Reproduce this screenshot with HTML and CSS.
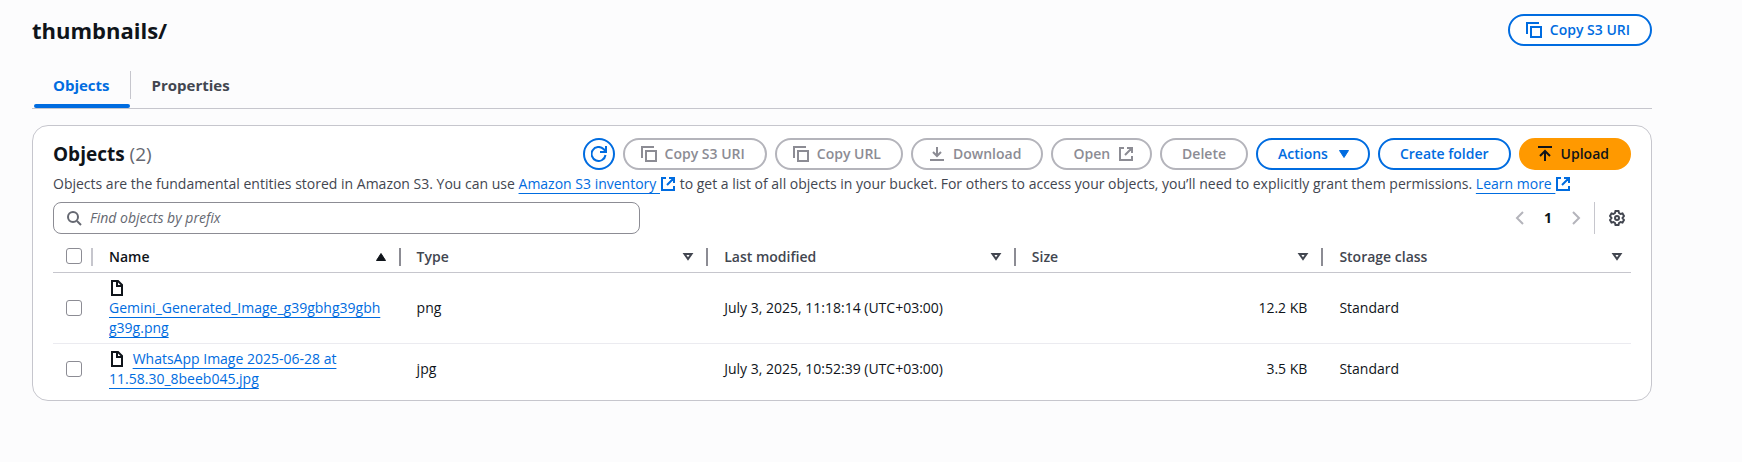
FILE: index.html
```html
<!DOCTYPE html>
<html lang="en">
<head>
<meta charset="utf-8">
<title>thumbnails/</title>
<link rel="stylesheet" href="styles.css">
</head>
<body>
<svg class="sprite" aria-hidden="true">
  <symbol id="copy" viewBox="0 0 16 16"><path d="M5 5h10v10H5zM1 12V1h12"/></symbol>
  <symbol id="external" viewBox="0 0 16 16"><path d="M6 2H2v12h12v-4M9 2h5v5M14 2 7 9"/></symbol>
  <symbol id="file" viewBox="0 0 16 16"><path d="M3 1h6l4 4v10H3zM8 1v5h5"/></symbol>
  <symbol id="sort" viewBox="0 0 16 16"><path d="M4.500 5h7L8 10z"/></symbol>
</svg>
<main class="page">
  <header class="page-header">
    <h1 class="page-title">thumbnails/</h1>
    <button class="button" type="button"><svg class="icon icon-left"><use href="#copy"/></svg>Copy S3 URI</button>
  </header>
  <nav class="tabs">
    <a class="tab tab-active" href="#objects">Objects</a>
    <a class="tab" href="#properties">Properties</a>
  </nav>
  <section class="panel" id="objects">
    <div class="panel-header">
      <h2 class="panel-title">Objects <span class="count">(2)</span></h2>
      <div class="actions">
        <button class="button button-round" type="button" aria-label="Refresh"><svg class="icon" viewBox="0 0 16 16"><path d="M14.500 9A7 7 0 1 1 12.500 3L15 5.500M15 0v6H9"/></svg></button>
        <button class="button" type="button" disabled><svg class="icon icon-left"><use href="#copy"/></svg>Copy S3 URI</button>
        <button class="button" type="button" disabled><svg class="icon icon-left"><use href="#copy"/></svg>Copy URL</button>
        <button class="button" type="button" disabled><svg class="icon icon-left" viewBox="0 0 16 16"><path d="M8 1v9M4 6l4 4 4-4M1 14h14"/></svg>Download</button>
        <button class="button" type="button" disabled>Open<svg class="icon icon-right"><use href="#external"/></svg></button>
        <button class="button" type="button" disabled>Delete</button>
        <button class="button" type="button">Actions<svg class="icon icon-right icon-solid" viewBox="0 0 16 16"><path d="M3.500 4.500h9l-4.500 7z"/></svg></button>
        <button class="button" type="button">Create folder</button>
        <button class="button button-primary" type="button"><svg class="icon icon-left" viewBox="0 0 16 16"><path d="M1 1h14M8 15V5M3 10l5-5 5 5"/></svg>Upload</button>
      </div>
    </div>
    <p class="description">Objects are the fundamental entities stored in Amazon S3. You can use <a class="link" href="#inventory">Amazon S3 inventory&nbsp;</a><svg class="icon icon-inline"><use href="#external"/></svg> to get a list of all objects in your bucket. For others to access your objects, you’ll need to explicitly grant them permissions. <a class="link" href="#learn">Learn more&nbsp;</a><svg class="icon icon-inline"><use href="#external"/></svg></p>
    <div class="tools">
      <label class="search">
        <svg class="icon" viewBox="0 0 16 16"><circle cx="7" cy="7" r="5"/><path d="m11 11 4 4"/></svg>
        <input class="search-input" type="text" placeholder="Find objects by prefix" aria-label="Find objects by prefix">
      </label>
      <div class="pager">
        <button class="icon-button muted" type="button" aria-label="Previous page"><svg class="icon" viewBox="0 0 16 16"><path d="m11 2-6 6 6 6"/></svg></button>
        <button class="page-number" type="button">1</button>
        <button class="icon-button muted" type="button" aria-label="Next page"><svg class="icon" viewBox="0 0 16 16"><path d="m5 2 6 6-6 6"/></svg></button>
        <span class="rule"></span>
        <button class="icon-button" type="button" aria-label="Preferences"><svg class="icon" viewBox="0 0 16 16"><path d="M6.500 1h3l.5 2 1.500 1 2-.5 1.500 2.500L13.500 8 15 10l-1.500 2.500-2-.5-1.500 1-.5 2h-3L6 13l-1.500-1-2 .5L1 10l1.500-2L1 6l1.500-2.500 2 .5L6 3z"/><circle cx="8" cy="8" r="2"/></svg></button>
      </div>
    </div>
    <table class="table">
      <thead>
        <tr>
          <th class="select-cell"><div class="head divided light"><input class="checkbox" type="checkbox" aria-label="Select all"></div></th>
          <th class="sorted"><div class="head divided">Name<svg class="icon icon-solid" viewBox="0 0 16 16"><path d="M3.500 11.500h9L8 4.500z"/></svg></div></th>
          <th><div class="head divided">Type<svg class="icon"><use href="#sort"/></svg></div></th>
          <th><div class="head divided">Last modified<svg class="icon"><use href="#sort"/></svg></div></th>
          <th><div class="head divided">Size<svg class="icon"><use href="#sort"/></svg></div></th>
          <th class="last"><div class="head">Storage class<svg class="icon"><use href="#sort"/></svg></div></th>
        </tr>
      </thead>
      <tbody>
        <tr>
          <td class="select-cell"><input class="checkbox" type="checkbox" aria-label="Select Gemini_Generated_Image_g39gbhg39gbhg39g.png"></td>
          <td class="name"><svg class="icon file-icon"><use href="#file"/></svg> <a class="link" href="#gemini">Gemini_Generated_Image_g39gbhg39gbhg39g.png</a></td>
          <td>png</td>
          <td>July 3, 2025, 11:18:14 (UTC+03:00)</td>
          <td class="size">12.2 KB</td>
          <td>Standard</td>
        </tr>
        <tr>
          <td class="select-cell"><input class="checkbox" type="checkbox" aria-label="Select WhatsApp Image 2025-06-28 at 11.58.30_8beeb045.jpg"></td>
          <td class="name"><svg class="icon file-icon"><use href="#file"/></svg> <a class="link" href="#whatsapp">WhatsApp Image 2025-06-28 at 11.58.30_8beeb045.jpg</a></td>
          <td>jpg</td>
          <td>July 3, 2025, 10:52:39 (UTC+03:00)</td>
          <td class="size">3.5 KB</td>
          <td>Standard</td>
        </tr>
      </tbody>
    </table>
  </section>
</main>
</body>
</html>
```
FILE: styles.css
```css
* { box-sizing: border-box; }
body {
  margin: 0;
  background: #fcfcfd;
  color: #0f141a;
  font: 14px/20px "Open Sans", sans-serif;
}
button, input { font: inherit; }
.sprite { position: absolute; width: 0; height: 0; }
.page { padding: 14px 90px 0 32px; }
.icon {
  width: 16px;
  height: 16px;
  flex: none;
  fill: none;
  stroke: currentColor;
  stroke-width: 2;
}
.icon-solid { fill: currentColor; stroke-width: 1; }
.page-header, .panel-header, .tools, .actions, .pager {
  display: flex;
  align-items: center;
}
.page-header, .panel-header, .tools { justify-content: space-between; }
.page-title { margin: 0; font-size: 22px; line-height: 28px; font-weight: 700; }
.button {
  display: flex;
  align-items: center;
  justify-content: center;
  gap: 8px;
  height: 32px;
  padding: 0 20px;
  border: 2px solid #006ce0;
  border-radius: 20px;
  background: #fff;
  color: #006ce0;
  font-weight: 600;
  white-space: nowrap;
}
.button:disabled { border-color: #b4b4bb; color: #8c8c94; }
.button-round { width: 32px; padding: 0; }
.button-primary { border-color: #ff9900; background: #ff9900; color: #0f141a; }
.icon-left { margin-left: -4px; }
.icon-right { margin-right: -4px; }
.tabs { display: flex; margin-top: 25px; border-bottom: 1px solid #c6c6cd; }
.tab {
  position: relative;
  padding: 4px 21px 13px;
  color: #424650;
  font-size: 15px;
  font-weight: 700;
  text-decoration: none;
}
.tab-active { color: #006ce0; }
.tab-active::before {
  content: "";
  position: absolute;
  inset: 0 0 9px auto;
  border-right: 1px solid #c6c6cd;
}
.tab-active::after {
  content: "";
  position: absolute;
  inset: auto 1px 0 2px;
  height: 4px;
  border-radius: 2px;
  background: #006ce0;
}
.panel {
  margin-top: 16px;
  padding: 12px 20px 6px;
  border: 1px solid #c6c6cd;
  border-radius: 16px;
  background: #fff;
}
.panel-title { margin: 0; font-size: 19px; line-height: 24px; font-weight: 700; }
.count { color: #656871; font-weight: 400; }
.actions { gap: 8px; }
.description { margin: 4px 0 8px; color: #424650; }
.link {
  color: #006ce0;
  text-decoration: underline 1px;
  text-underline-offset: 4px;
  text-decoration-skip-ink: none;
}
.icon-inline { color: #006ce0; vertical-align: -3px; }
.search {
  display: flex;
  align-items: center;
  gap: 8px;
  width: 587px;
  height: 32px;
  padding: 0 12px;
  border: 1px solid #8c8c94;
  border-radius: 8px;
  color: #656871;
}
.search-input { flex: 1; padding: 0; border: 0; outline: 0; background: none; }
.search-input::placeholder { color: #656871; font-style: italic; opacity: 1; }
.icon-button, .page-number { display: flex; padding: 0; border: 0; background: none; color: #424650; }
.page-number { padding: 0 16px; color: #0f141a; font-weight: 700; }
.muted { color: #b4b4bb; }
.rule { width: 1px; height: 32px; margin: 0 14px 0 10px; background: #c6c6cd; }
.pager { padding-right: 6px; }
.table { width: 100%; margin-top: 8px; border-spacing: 0; table-layout: fixed; }
th, td { padding: 5px 16px; text-align: left; }
th { height: 31px; padding: 0 0 0 16px; border-bottom: 1px solid #c6c6cd; color: #424650; font-weight: 600; }
.sorted { color: #0f141a; }
.select-cell { width: 40px; padding: 0 0 0 13px; }
td { border-bottom: 1px solid #ebebf0; }
tr:last-child td { border-bottom: 0; }
.head { display: flex; align-items: center; justify-content: space-between; height: 18px; }
.divided { padding-right: 10px; border-right: 2px solid #8c8c94; }
.light { align-items: start; padding-right: 0; border-color: #c6c6cd; }
.last { padding-right: 6px; }
.checkbox {
  display: block;
  flex: none;
  appearance: none;
  width: 16px;
  height: 16px;
  margin: 0;
  border: 1px solid #8c8c94;
  border-radius: 3px;
  background: #fff;
}
.name { overflow-wrap: break-word; }
.file-icon { margin-right: 4px; vertical-align: -3px; }
.size { text-align: right; }
```
